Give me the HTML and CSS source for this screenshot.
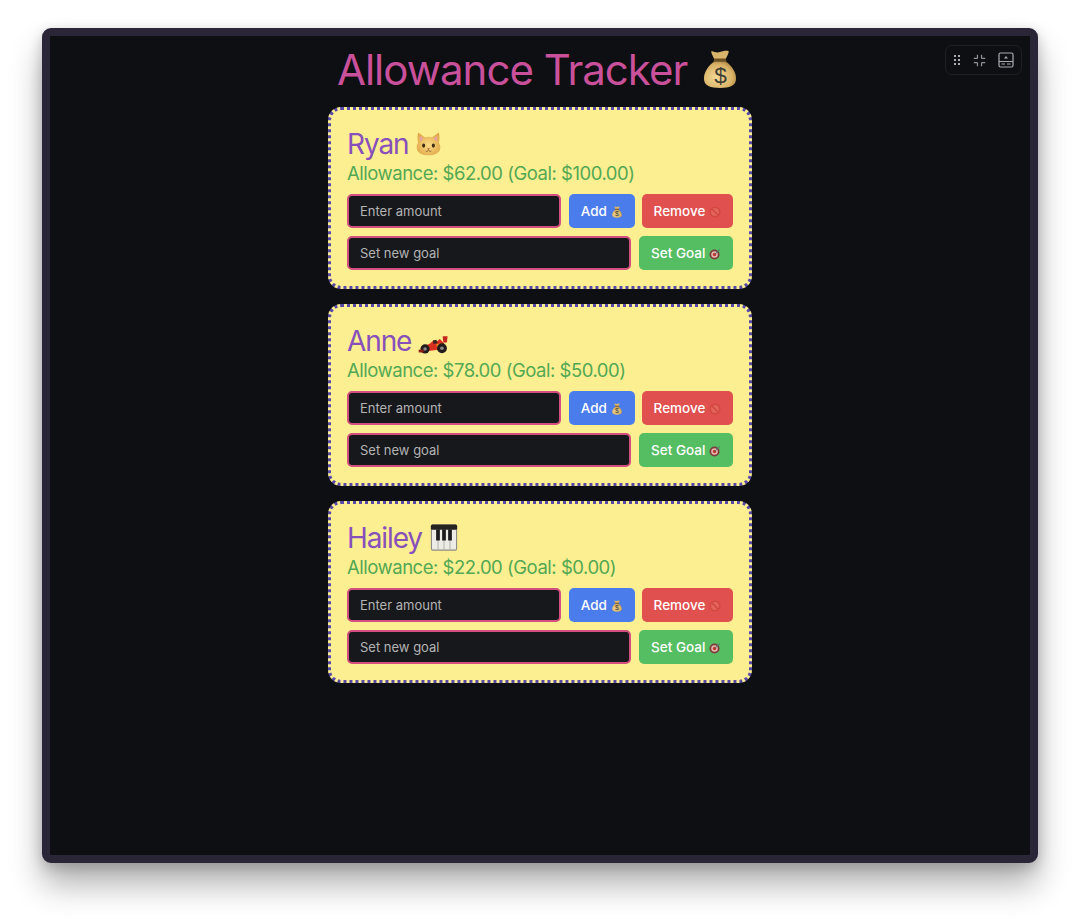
FILE: index.html
```html
<!DOCTYPE html>
<html lang="en">
<head>
    <meta charset="UTF-8">
    <meta name="viewport" content="width=device-width, initial-scale=1.0">
    <title>Allowance Tracker</title>
    <link rel="stylesheet" href="styles.css">
</head>
<body>
    <!-- Emoji drawings, there is no colour emoji font -->
    <svg class="defs" aria-hidden="true">
        <defs>
            <radialGradient id="bag-fill" cx="40%" cy="60%" r="70%">
                <stop offset="0" stop-color="#f3d998"/>
                <stop offset="0.7" stop-color="#d8b266"/>
                <stop offset="1" stop-color="#a07a38"/>
            </radialGradient>
            <radialGradient id="cat-fill" cx="50%" cy="55%" r="60%">
                <stop offset="0" stop-color="#fbdc86"/>
                <stop offset="1" stop-color="#dfa544"/>
            </radialGradient>
            <symbol id="e-bag" viewBox="0 0 36 42">
                <path d="M9 2c3 1 6 2 9 1 3-1 6-2 9-1 1 1-2 7-4 10H13C11 9 8 3 9 2z" fill="#d9b56c"/>
                <path d="M12 10h12l1 3H11z" fill="#6e4f22"/>
                <path d="M12 13C6 17 1 24 1 31c0 8 7 10 17 10s17-2 17-10c0-7-5-14-11-18z" fill="url(#bag-fill)"/>
                <text x="18" y="36" text-anchor="middle" font-family="Liberation Sans, sans-serif" font-size="24" fill="#3f3d33">$</text>
            </symbol>
            <symbol id="e-cat" viewBox="0 0 36 36">
                <path d="M3 2l10 7c3-1 7-1 10 0l10-7c1 6 1 11 0 15 2 3 2 5 2 7 0 7-8 11-17 11S1 31 1 24c0-2 0-4 2-7C2 13 2 8 3 2z" fill="url(#cat-fill)"/>
                <path d="M5 6l6 5-5 4zM31 6l-6 5 5 4z" fill="#e9a3a0"/>
                <ellipse cx="11" cy="21" rx="2.200" ry="3" fill="#3d2b16"/>
                <ellipse cx="25" cy="21" rx="2.200" ry="3" fill="#3d2b16"/>
                <path d="M16 25h4l-2 2z" fill="#a3552f"/>
                <path d="M14 29c2 1 3 0 4-2 1 2 2 3 4 2" fill="none" stroke="#6b4420" stroke-width="1"/>
            </symbol>
            <symbol id="e-car" viewBox="0 0 44 28">
                <path d="M35 3h7l-1 9h-5z" fill="#c5271c"/>
                <path d="M4 18l12-4 6-5 5 1 4-3 6 6 1 8-24 3H6z" fill="#d92f20"/>
                <path d="M21 9l5-1 2 5-6 1z" fill="#3a2520"/>
                <path d="M26 14l8-1 1 5-8 1z" fill="#f08a1c"/>
                <circle cx="10" cy="21" r="6.500" fill="#221c1c"/>
                <circle cx="10" cy="21" r="2.500" fill="#8a8a8a"/>
                <circle cx="34" cy="20" r="7" fill="#221c1c"/>
                <circle cx="34" cy="20" r="2.600" fill="#8a8a8a"/>
                <path d="M1 22h7v4H1z" fill="#8f1d14"/>
            </symbol>
            <symbol id="e-piano" viewBox="0 0 36 36">
                <rect x="0.500" y="0.500" width="35" height="35" rx="2.500" fill="#8f8c86"/>
                <rect x="2" y="2" width="32" height="32" rx="1" fill="#ecebe6"/>
                <rect x="0.500" y="0.500" width="35" height="7" rx="2" fill="#242322"/>
                <path d="M10 7v27M18 7v27M26 7v27" stroke="#a5a29c" stroke-width="1"/>
                <path d="M7.500 7h5v15h-5zM15.500 7h5v15h-5zM23.500 7h5v15h-5z" fill="#1c1c1e"/>
            </symbol>
            <symbol id="e-no" viewBox="0 0 24 24">
                <circle cx="12" cy="12" r="9.500" fill="#e2645d" stroke="#d2483f" stroke-width="3"/>
                <path d="M5 5l14 14" stroke="#d2483f" stroke-width="3"/>
            </symbol>
            <symbol id="e-target" viewBox="0 0 24 24">
                <circle cx="11" cy="13" r="10" fill="#7a3c3c"/>
                <circle cx="11" cy="13" r="6.500" fill="#e7b9ae"/>
                <circle cx="11" cy="13" r="3.500" fill="#c6332b"/>
                <path d="M11 13L22 3" stroke="#4f6f7d" stroke-width="2"/>
            </symbol>
        </defs>
    </svg>

    <div class="window">
        <div class="toolbar">
            <svg class="tool tool-grip" viewBox="0 0 8 12">
                <path d="M1 1h2v2H1zM5 1h2v2H5zM1 5h2v2H1zM5 5h2v2H5zM1 9h2v2H1zM5 9h2v2H5z" fill="#a9acb2"/>
            </svg>
            <svg class="tool tool-shrink" viewBox="0 0 16 16" fill="none" stroke="#8f9399" stroke-width="1.500">
                <path d="M5.500 1v3.500a1 1 0 0 1-1 1H1M10.500 1v3.500a1 1 0 0 0 1 1H15M5.500 15v-3.500a1 1 0 0 0-1-1H1M10.500 15v-3.500a1 1 0 0 1 1-1H15"/>
            </svg>
            <svg class="tool tool-panel" viewBox="0 0 16 16" fill="none" stroke="#a9acb2" stroke-width="1.200">
                <rect x="1" y="1" width="14" height="14" rx="1.500"/>
                <path d="M1 9.500h14M3.500 12h3.500M9 12h3.500"/>
                <path d="M8 4l2 2.500H6z" fill="#a9acb2" stroke="none"/>
            </svg>
        </div>

        <h1 class="title">Allowance Tracker <svg class="emoji-title"><use href="#e-bag"/></svg></h1>

        <div class="card">
            <h2 class="kid-name">Ryan <svg class="emoji-cat"><use href="#e-cat"/></svg></h2>
            <p class="balance">Allowance: $62.00 (Goal: $100.00)</p>
            <div class="row">
                <input class="amount" type="text" placeholder="Enter amount">
                <button class="btn btn-add">Add <svg class="emoji-btn"><use href="#e-bag"/></svg></button>
                <button class="btn btn-remove">Remove <svg class="emoji-btn"><use href="#e-no"/></svg></button>
            </div>
            <div class="row">
                <input class="amount" type="text" placeholder="Set new goal">
                <button class="btn btn-goal">Set Goal <svg class="emoji-btn"><use href="#e-target"/></svg></button>
            </div>
        </div>

        <div class="card">
            <h2 class="kid-name">Anne <svg class="emoji-car"><use href="#e-car"/></svg></h2>
            <p class="balance">Allowance: $78.00 (Goal: $50.00)</p>
            <div class="row">
                <input class="amount" type="text" placeholder="Enter amount">
                <button class="btn btn-add">Add <svg class="emoji-btn"><use href="#e-bag"/></svg></button>
                <button class="btn btn-remove">Remove <svg class="emoji-btn"><use href="#e-no"/></svg></button>
            </div>
            <div class="row">
                <input class="amount" type="text" placeholder="Set new goal">
                <button class="btn btn-goal">Set Goal <svg class="emoji-btn"><use href="#e-target"/></svg></button>
            </div>
        </div>

        <div class="card">
            <h2 class="kid-name">Hailey <svg class="emoji-piano"><use href="#e-piano"/></svg></h2>
            <p class="balance">Allowance: $22.00 (Goal: $0.00)</p>
            <div class="row">
                <input class="amount" type="text" placeholder="Enter amount">
                <button class="btn btn-add">Add <svg class="emoji-btn"><use href="#e-bag"/></svg></button>
                <button class="btn btn-remove">Remove <svg class="emoji-btn"><use href="#e-no"/></svg></button>
            </div>
            <div class="row">
                <input class="amount" type="text" placeholder="Set new goal">
                <button class="btn btn-goal">Set Goal <svg class="emoji-btn"><use href="#e-target"/></svg></button>
            </div>
        </div>
    </div>
</body>
</html>
```

FILE: styles.css
```css
:root {
    --pink: #c9509a;
    --purple: #8750bb;
    --green: #53a853;
    --card-bg: #fcef91;
    --dots: #5849a8;
    --field-bg: #17181b;
}

html, body {
    height: 100%;
}

body {
    margin: 0;
    padding: 28px 42px 0;
    box-sizing: border-box;
    overflow: hidden;
    background-color: #fff;
    font-family: Inter, 'Liberation Sans', sans-serif;
}

/* keeps the gradients usable, display: none would drop them */
.defs {
    position: absolute;
    width: 0;
    height: 0;
}

.window {
    position: relative;
    box-sizing: border-box;
    width: 996px;
    height: 835px;
    padding-top: 8px;
    display: flex;
    flex-direction: column;
    align-items: center;
    gap: 15px;
    background-color: #0e0f12;
    border: 8px solid #2a2637;
    border-radius: 9px;
    box-shadow: 0 22px 32px rgba(0, 0, 0, 0.3), 0 4px 14px rgba(0, 0, 0, 0.2);
}

.toolbar {
    position: absolute;
    top: 9px;
    right: 8px;
    box-sizing: border-box;
    display: flex;
    align-items: center;
    gap: 12px;
    height: 30px;
    padding: 0 7px;
    border: 1px solid #1d1f25;
    border-radius: 7px;
}

.tool {
    display: block;
}

.tool-grip {
    width: 8px;
    height: 12px;
}

.tool-shrink {
    width: 13px;
    height: 13px;
}

.tool-panel {
    width: 16px;
    height: 16px;
}

.title {
    margin: 0;
    height: 48px;
    line-height: 52px;
    font-size: 42px;
    font-weight: 400;
    letter-spacing: -1px;
    color: var(--pink);
    white-space: nowrap;
}

.emoji-title {
    width: 34px;
    height: 42px;
    margin: 0 6px 0 5px;
    vertical-align: -5px;
}

.card {
    box-sizing: border-box;
    width: 424px;
    height: 182px;
    padding: 16px 16px 0;
    background-color: var(--card-bg);
    border: 3px dotted var(--dots);
    border-radius: 13px;
}

.kid-name {
    margin: 0;
    height: 36px;
    line-height: 36px;
    font-size: 28px;
    font-weight: 400;
    letter-spacing: -1.100px;
    color: var(--purple);
}

.emoji-cat {
    width: 25px;
    height: 25px;
    margin-left: 1px;
    vertical-align: -2px;
}

.emoji-piano {
    width: 28px;
    height: 27px;
    margin-left: 1px;
    vertical-align: -3px;
}

.emoji-car {
    width: 31px;
    height: 20px;
    vertical-align: -3px;
}

.balance {
    margin: 0 0 6px;
    height: 26px;
    line-height: 22px;
    font-size: 18.500px;
    letter-spacing: -0.480px;
    color: var(--green);
}

.row {
    display: flex;
    gap: 8px;
    height: 34px;
    margin-bottom: 8px;
}

.amount {
    flex: 1;
    min-width: 0;
    box-sizing: border-box;
    padding: 0 11px;
    background-color: var(--field-bg);
    border: 2px solid #d24f80;
    border-radius: 5px;
    font-family: inherit;
    font-size: 13px;
    color: #fff;
}

.amount::placeholder {
    color: #b4b4b4;
    opacity: 1;
}

.btn {
    padding: 0 12px;
    border: none;
    border-radius: 5px;
    font-family: inherit;
    font-size: 13.500px;
    font-weight: 500;
    color: #fff;
    white-space: nowrap;
}

.btn-add {
    margin-right: -1px;
    background-color: #4a7cec;
}

.btn-remove {
    background-color: #e0504f;
}

.btn-goal {
    background-color: #55bd62;
}

.emoji-btn {
    width: 12px;
    height: 12px;
    vertical-align: -2px;
}
```
